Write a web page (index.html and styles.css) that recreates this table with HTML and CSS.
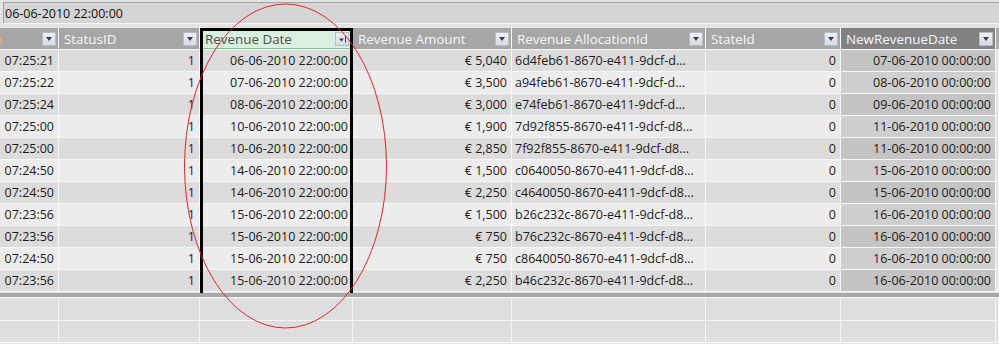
FILE: index.html
```html
<!DOCTYPE html>
<html>
<head>
<meta charset="utf-8">
<link rel="stylesheet" href="styles.css">
</head>
<body>
<div class="screen">
  <div class="formula">06-06-2010 22:00:00</div>
  <div class="sheet">
    <div class="row head">
      <div class="c c0"><span class="cut">n</span><span class="dd"></span></div>
      <div class="c c1"><span>StatusID</span><span class="dd"></span></div>
      <div class="c c2 sel-head"><span>Revenue Date</span><span class="dd sorted"><svg width="12" height="12" viewBox="0 0 12 12"><path d="M3 5.5h5l-2.5 3z" fill="#2f3b4f"/><path d="M9.5 2.5v7" stroke="#2f3b4f" stroke-width="1"/></svg></span></div>
      <div class="c c3"><span>Revenue Amount</span><span class="dd"></span></div>
      <div class="c c4"><span>Revenue AllocationId</span><span class="dd"></span></div>
      <div class="c c5"><span>StateId</span><span class="dd"></span></div>
      <div class="c c6"><span>NewRevenueDate</span><span class="dd"></span></div>
      <div class="c c7"></div>
    </div>

    <div class="row a"><div class="c c0">07:25:21</div><div class="c c1">1</div><div class="c c2">06-06-2010 22:00:00</div><div class="c c3">€ 5,040</div><div class="c c4 l">6d4feb61-8670-e411-9dcf-d...</div><div class="c c5">0</div><div class="c c6">07-06-2010 00:00:00</div><div class="c c7"></div></div>
    <div class="row b"><div class="c c0">07:25:22</div><div class="c c1">1</div><div class="c c2">07-06-2010 22:00:00</div><div class="c c3">€ 3,500</div><div class="c c4 l">a94feb61-8670-e411-9dcf-d...</div><div class="c c5">0</div><div class="c c6">08-06-2010 00:00:00</div><div class="c c7"></div></div>
    <div class="row a"><div class="c c0">07:25:24</div><div class="c c1">1</div><div class="c c2">08-06-2010 22:00:00</div><div class="c c3">€ 3,000</div><div class="c c4 l">e74feb61-8670-e411-9dcf-d...</div><div class="c c5">0</div><div class="c c6">09-06-2010 00:00:00</div><div class="c c7"></div></div>
    <div class="row b"><div class="c c0">07:25:00</div><div class="c c1">1</div><div class="c c2">10-06-2010 22:00:00</div><div class="c c3">€ 1,900</div><div class="c c4 l">7d92f855-8670-e411-9dcf-d8...</div><div class="c c5">0</div><div class="c c6">11-06-2010 00:00:00</div><div class="c c7"></div></div>
    <div class="row a"><div class="c c0">07:25:00</div><div class="c c1">1</div><div class="c c2">10-06-2010 22:00:00</div><div class="c c3">€ 2,850</div><div class="c c4 l">7f92f855-8670-e411-9dcf-d8...</div><div class="c c5">0</div><div class="c c6">11-06-2010 00:00:00</div><div class="c c7"></div></div>
    <div class="row b"><div class="c c0">07:24:50</div><div class="c c1">1</div><div class="c c2">14-06-2010 22:00:00</div><div class="c c3">€ 1,500</div><div class="c c4 l">c0640050-8670-e411-9dcf-d8...</div><div class="c c5">0</div><div class="c c6">15-06-2010 00:00:00</div><div class="c c7"></div></div>
    <div class="row a"><div class="c c0">07:24:50</div><div class="c c1">1</div><div class="c c2">14-06-2010 22:00:00</div><div class="c c3">€ 2,250</div><div class="c c4 l">c4640050-8670-e411-9dcf-d8...</div><div class="c c5">0</div><div class="c c6">15-06-2010 00:00:00</div><div class="c c7"></div></div>
    <div class="row b"><div class="c c0">07:23:56</div><div class="c c1">1</div><div class="c c2">15-06-2010 22:00:00</div><div class="c c3">€ 1,500</div><div class="c c4 l">b26c232c-8670-e411-9dcf-d8...</div><div class="c c5">0</div><div class="c c6">16-06-2010 00:00:00</div><div class="c c7"></div></div>
    <div class="row a"><div class="c c0">07:23:56</div><div class="c c1">1</div><div class="c c2">15-06-2010 22:00:00</div><div class="c c3">€ 750</div><div class="c c4 l">b76c232c-8670-e411-9dcf-d8...</div><div class="c c5">0</div><div class="c c6">16-06-2010 00:00:00</div><div class="c c7"></div></div>
    <div class="row b"><div class="c c0">07:24:50</div><div class="c c1">1</div><div class="c c2">15-06-2010 22:00:00</div><div class="c c3">€ 750</div><div class="c c4 l">c8640050-8670-e411-9dcf-d8...</div><div class="c c5">0</div><div class="c c6">16-06-2010 00:00:00</div><div class="c c7"></div></div>
    <div class="row a"><div class="c c0">07:23:56</div><div class="c c1">1</div><div class="c c2">15-06-2010 22:00:00</div><div class="c c3">€ 2,250</div><div class="c c4 l">b46c232c-8670-e411-9dcf-d8...</div><div class="c c5">0</div><div class="c c6">16-06-2010 00:00:00</div><div class="c c7"></div></div>

    <div class="divider"></div>

    <div class="row empty"><div class="c c0"></div><div class="c c1"></div><div class="c c2"></div><div class="c c3"></div><div class="c c4"></div><div class="c c5"></div><div class="c c6"></div><div class="c c7"></div></div>
    <div class="row empty"><div class="c c0"></div><div class="c c1"></div><div class="c c2"></div><div class="c c3"></div><div class="c c4"></div><div class="c c5"></div><div class="c c6"></div><div class="c c7"></div></div>

    <div class="selection"></div>
  </div>
  <svg class="ring" width="999" height="344" viewBox="0 0 999 344"><ellipse cx="285.5" cy="164" rx="101" ry="162" fill="none" stroke="#e2242a" stroke-width="1"/></svg>
</div>
</body>
</html>
```

FILE: styles.css
```css
* { box-sizing: border-box; }

html, body {
  margin: 0;
  padding: 0;
}

body {
  width: 999px;
  height: 344px;
  overflow: hidden;
  background: #e3e3e3;
  font-family: "Open Sans", "DejaVu Sans", sans-serif;
  color: #1b1b1b;
}

.screen {
  position: relative;
  width: 999px;
  height: 344px;
}

.formula {
  margin: 2px 0 4px 3px;
  height: 22px;
  border-top: 1px solid #a2a2a2;
  border-left: 1px solid #a2a2a2;
  border-bottom: 1px solid #f4f4f4;
  background: #d5d5d5;
  padding-left: 1px;
  display: flex;
  align-items: center;
  font-size: 12.5px;
  color: #111;
}

.sheet {
  position: relative;
}

.row {
  display: flex;
  height: 22px;
  border-bottom: 1px solid #f7f7f7;
}

.c {
  flex: none;
  height: 100%;
  border-right: 1px solid #f7f7f7;
  display: flex;
  align-items: center;
  justify-content: flex-end;
  padding: 0 4px;
  white-space: nowrap;
  overflow: hidden;
  font-size: 12.5px;
}

.c.l { justify-content: flex-start; padding-left: 3px; }

.c0 { width: 59px; }
.c1 { width: 141px; }
.c2 { width: 153px; }
.c3 { width: 159px; }
.c4 { width: 194px; }
.c5 { width: 135px; }
.c6 { width: 155px; }
.c7 { flex: 1; padding: 0; }

.row.a { background: #dcdcdc; }
.row.b { background: #ececec; }
.row.a .c6 { background: #c4c4c4; }
.row.b .c6 { background: #cfcfcf; }
.row.a .c7, .row.b .c7 { background: #e2e2e2; }

.head .c {
  background: #a6a6a6;
  color: #f6f6f6;
  font-size: 13.4px;
  justify-content: flex-start;
  padding: 0 2px 0 5px;
}

.head .c6 { background: #828282; }
.head .c7 { background: #ababab; }

.head .c0 { padding-left: 0; }

.cut {
  color: #f2b068;
  margin-left: -6px;
}

.head .sel-head {
  background: #d9efdf;
  color: #4d4d4d;
  box-shadow: inset 0 -1px 0 #74c78d;
}

.dd {
  margin-left: auto;
  width: 14px;
  height: 14px;
  flex: none;
  border: 1px solid #b5bdc8;
  background: linear-gradient(#eef1f5, #d6dce4);
  display: flex;
  align-items: center;
  justify-content: center;
  margin-top: 1px;
}

.dd::after {
  content: "";
  width: 0;
  height: 0;
  border-left: 3.5px solid transparent;
  border-right: 3.5px solid transparent;
  border-top: 4px solid #2f3b4f;
}

.dd.sorted::after { display: none; }
.dd.sorted { margin-right: 1px; }

.divider {
  height: 6px;
  border-top: 1px solid #e3e3e3;
  border-bottom: 1px solid #f7f7f7;
  background: #a8a8a8;
  margin-bottom: 1px;
}

.row.empty { background: #dedede; }

.selection {
  position: absolute;
  left: 200px;
  top: 0;
  width: 153px;
  height: 265px;
  border: 3px solid #000;
  border-bottom: none;
  pointer-events: none;
}

.ring {
  position: absolute;
  left: 0;
  top: 0;
  pointer-events: none;
}
```
